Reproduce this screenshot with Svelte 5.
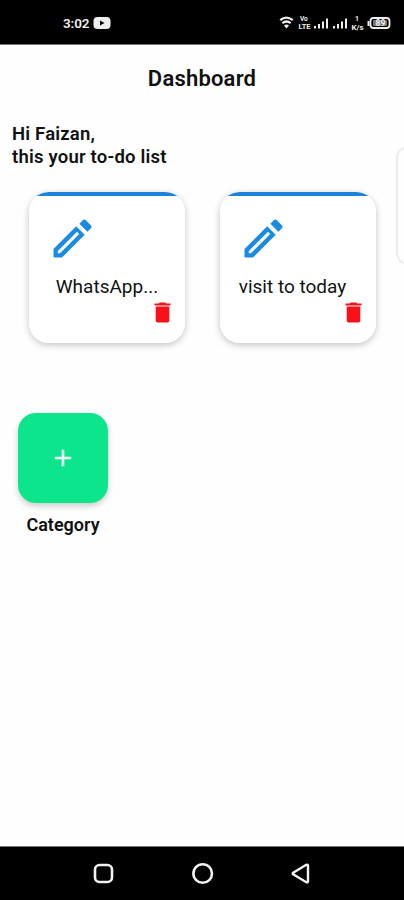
<script>
  const tasks = [
    { id: 1, title: 'WhatsApp...' },
    { id: 2, title: 'visit to today', long: true }
  ]
</script>

<style>
  :global(body) {
    background: #fefefe;
    overflow: hidden;
  }

  .screen {
    position: relative;
    display: flex;
    flex-direction: column;
    width: 404px;
    height: 900px;
    overflow: hidden;
    background: #fefefe;
    color: #111;
    font-family: Roboto, sans-serif;
  }

  .status {
    display: flex;
    align-items: center;
    box-sizing: border-box;
    height: 45px;
    padding: 2px 13px 0 63px;
    border-bottom: 1px solid #777;
    background: #000;
    color: #eee;
  }

  .time {
    width: 27px;
    font-size: 13.5px;
    font-weight: 600;
    letter-spacing: -0.1px;
  }

  .video {
    margin-left: 3px;
  }

  .signals {
    margin-left: auto;
  }

  .signals text {
    fill: #eee;
    font-family: Roboto, sans-serif;
    font-weight: 700;
  }

  main {
    flex: 1;
  }

  h1 {
    margin: 21px 0 0;
    text-align: center;
    font-size: 22px;
    font-weight: 600;
    line-height: 26px;
    letter-spacing: 0.2px;
  }

  .greeting {
    margin: 31px 0 0 12px;
    font-size: 18.5px;
    font-weight: 600;
    line-height: 23px;
    letter-spacing: 0.2px;
  }

  .tasks {
    display: flex;
    gap: 35px;
    margin: 23px 0 0 29px;
  }

  .card {
    display: flex;
    flex-direction: column;
    box-sizing: border-box;
    width: 156px;
    height: 151px;
    border-radius: 20px;
    background: linear-gradient(#1b84d8 4px, #fff 4px);
    box-shadow: 0 2px 7px rgba(0, 0, 0, 0.24);
  }

  .pencil {
    margin: 27px 0 0 24px;
  }

  .card p {
    margin: 17px 0 0;
    text-align: center;
    font-size: 19px;
    line-height: 24px;
    white-space: nowrap;
  }

  .card p.long {
    padding-right: 11px;
  }

  .trash {
    align-self: flex-end;
    margin: 3px 14px 0 0;
  }

  .category {
    display: flex;
    flex-direction: column;
    align-items: center;
    width: 90px;
    margin: 70px 0 0 18px;
  }

  .add {
    display: grid;
    place-items: center;
    width: 90px;
    height: 90px;
    padding: 0;
    border: 0;
    border-radius: 18px;
    background: #0de58d;
    box-shadow: 0 3px 6px rgba(0, 0, 0, 0.2);
  }

  .category span {
    margin-top: 10px;
    font-size: 18px;
    font-weight: 600;
    line-height: 24px;
  }

  /* edge of the panel that slides in from the right */
  .drawer {
    position: absolute;
    top: 146px;
    right: -20px;
    box-sizing: border-box;
    width: 28px;
    height: 119px;
    border: 2px solid #ececec;
    border-radius: 12px;
    background: #fefefe;
  }

  .navbar {
    display: flex;
    box-sizing: border-box;
    height: 54px;
    padding: 15px 0 0 92px;
    gap: 75px;
    border-top: 1px solid #777;
    background: #000;
  }

  svg {
    display: block;
    flex: none;
  }
</style>

<div class="screen">
  <header class="status">
    <span class="time">3:02</span>
    <svg class="video" width="18" height="14" viewBox="0 0 18 14">
      <rect x="0.5" y="1" width="17" height="12" rx="4" fill="#eee" />
      <path d="M7 4.500v5l4.500-2.500z" fill="#000" />
    </svg>
    <svg class="signals" width="112" height="20" viewBox="0 0 112 20">
      <g fill="none" stroke="#eee" stroke-width="2.200">
        <path d="M1.200 7.200q6-5 12.600 0M3.300 10.200q4.200-3.400 8.400 0" />
      </g>
      <path d="M5 12.500q2.500-2 5 0L7.500 15.500z" fill="#eee" />
      <text x="21" y="8" font-size="6.500">Vo</text>
      <text x="19.500" y="16" font-size="7" textLength="12" lengthAdjust="spacingAndGlyphs">LTE</text>
      <g fill="#eee">
        <path d="M35 13h2v2.500h-2zM39 11h2v4.500h-2zM43 8.500h2v7h-2zM47 5.500h2v10h-2z" />
        <path d="M54 13h2v2.500h-2zM58 11h2v4.500h-2zM62 8.500h2v7h-2zM66 5.500h2v10h-2z" />
      </g>
      <text x="76" y="8" font-size="7">1</text>
      <text x="72.500" y="16.500" font-size="7" textLength="12" lengthAdjust="spacingAndGlyphs">K/s</text>
      <path d="M88.500 8h2v5h-2z" fill="#eee" />
      <rect x="91.500" y="5" width="19" height="10" rx="3" fill="none" stroke="#eee" stroke-width="1.800" />
      <rect x="94" y="7" width="14" height="6" rx="1" fill="#777" />
      <text x="96.500" y="13" font-size="8.500">89</text>
    </svg>
  </header>

  <main>
    <h1>Dashboard</h1>
    <p class="greeting">Hi Faizan,<br />this your to-do list</p>

    <div class="tasks">
      {#each tasks as task (task.id)}
        <article class="card">
          <svg class="pencil" width="39" height="39" viewBox="0 0 39 39" fill="#198be3">
            <path
              fill-rule="evenodd"
              d="M1.500 38.500Q.5 38.500.5 37.500V30L23.200 7.300l8.500 8.500L9 38.500zM4.800 32v2.200H7L26.200 15 24 12.800z"
            />
            <path d="M26.400 4.700l3.400-3.400q1.500-1.400 3 0l5 5q1.400 1.500 0 3l-3.400 3.400z" />
          </svg>
          <p class:long={task.long}>{task.title}</p>
          <svg class="trash" width="17" height="21" viewBox="0 0 17 21" fill="#f91119">
            <path d="M1.700 4.500h13.600v14q0 2-2 2H3.700q-2 0-2-2z" />
            <path d="M.5 1.500h4.300L5.800.5h5.400l1 1h4.300v2H.5z" />
          </svg>
        </article>
      {/each}
    </div>

    <section class="category">
      <button class="add" aria-label="Add category">
        <svg width="18" height="18" viewBox="0 0 18 18">
          <path d="M9 .8v16.400M.8 9h16.400" stroke="#f4fff9" stroke-width="2.600" />
        </svg>
      </button>
      <span>Category</span>
    </section>
  </main>

  <aside class="drawer"></aside>

  <footer class="navbar">
    <svg width="24" height="24" viewBox="0 0 24 24" fill="none" stroke="#f2f2f2" stroke-width="2.600">
      <rect x="3" y="3" width="17" height="17" rx="4.500" />
    </svg>
    <svg width="24" height="24" viewBox="0 0 24 24" fill="none" stroke="#f2f2f2" stroke-width="2.600">
      <circle cx="11.700" cy="11.500" r="9.300" />
    </svg>
    <svg width="24" height="24" viewBox="0 0 24 24" fill="none" stroke="#f2f2f2" stroke-width="2.400">
      <path d="M16.300 2.800L3.200 10.700q-1 .8 0 1.600l13.100 7.900q1.700.5 1.700-1V3.800q0-1.500-1.700-1z" />
    </svg>
  </footer>
</div>
